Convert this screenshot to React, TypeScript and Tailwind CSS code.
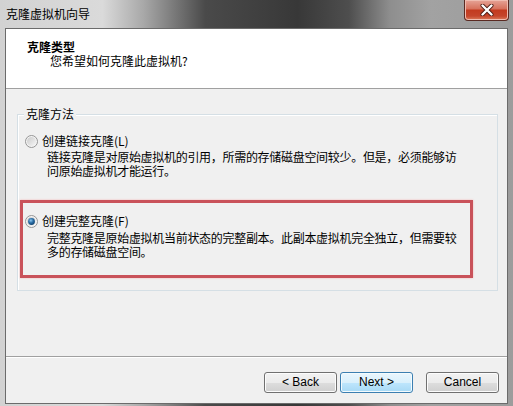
import React from "react";

const cjk = { fontFamily: '"Noto Sans CJK SC", "Liberation Sans", sans-serif' };
const latin = { fontFamily: '"Liberation Sans", "Noto Sans", sans-serif' };

function Radio({ checked }: { checked?: boolean }) {
  return (
    <svg width="13" height="13" viewBox="0 0 13 13" className="shrink-0">
      <defs>
        <linearGradient id={checked ? "rOn" : "rOff"} x1="0" y1="0" x2="1" y2="1">
          <stop offset="0" stopColor="#cbcbcb" />
          <stop offset="1" stopColor="#f6f6f6" />
        </linearGradient>
        <radialGradient id="dot" cx="0.4" cy="0.35" r="0.7">
          <stop offset="0" stopColor="#8cc7ee" />
          <stop offset="0.5" stopColor="#2b6ea6" />
          <stop offset="1" stopColor="#10416c" />
        </radialGradient>
      </defs>
      <circle cx="6.5" cy="6.5" r="6" fill="#f4f4f4" stroke="#959595" strokeWidth="1" />
      <circle cx="6.5" cy="6.5" r="4.5" fill={checked ? "url(#rOn)" : "url(#rOff)"} />
      {checked && <circle cx="6.5" cy="6.5" r="3.4" fill="url(#dot)" />}
    </svg>
  );
}

function WinButton({ label, primary }: { label: string; primary?: boolean }) {
  return (
    <button
      style={latin}
      className={
        primary
          ? "h-[21px] w-[73px] rounded-[3px] border border-[#3c7fb1] bg-[linear-gradient(#eaf6fd_0%,#d9f0fc_50%,#bee6fd_51%,#a7d9f5_100%)] text-[12px] leading-[19px] text-black shadow-[inset_0_0_0_1px_#f4fbfe]"
          : "h-[21px] w-[73px] rounded-[3px] border border-[#707070] bg-[linear-gradient(#f2f2f2_0%,#ebebeb_50%,#dddddd_51%,#cfcfcf_100%)] text-[12px] leading-[19px] text-black shadow-[inset_0_0_0_1px_#fcfcfc]"
      }
    >
      {label}
    </button>
  );
}

export default function App() {
  return (
    <div className="relative h-[406px] w-[513px] overflow-hidden bg-[linear-gradient(to_right,#d2d2d2_0%,#dadada_20%,#a8a8a8_28%,#4a4a4a_40%,#383838_58%,#4e4e4e_68%,#8e8e8e_76%,#a2a2a2_84%,#9c9c9c_100%)]">
      {/* title bar */}
      <div className="flex h-[28px] items-start">
        <span style={cjk} className="pl-[6px] pt-[6px] text-[12px] leading-[16px] text-black">
          克隆虚拟机向导
        </span>
      </div>
      <div className="absolute right-[4px] top-0 flex h-[21px] w-[45px] items-center justify-center rounded-b-[4px] border border-t-0 border-[#5a2a22] bg-[linear-gradient(#e6a497_0%,#d6705b_45%,#c23a1f_50%,#c5452b_80%,#dc7c5c_100%)] shadow-[inset_0_0_0_1px_#efbcb0]">
        <svg width="14" height="12" viewBox="0 0 14 12">
          <path d="M2.5 1.5 L11.5 10.5 M11.5 1.5 L2.5 10.5" stroke="#4a1a12" strokeWidth="4" strokeLinecap="round" />
          <path d="M2.5 1.5 L11.5 10.5 M11.5 1.5 L2.5 10.5" stroke="#ffffff" strokeWidth="2.4" strokeLinecap="round" />
        </svg>
      </div>

      {/* client area */}
      <div className="ml-[5px] flex h-[376px] w-[503px] flex-col border border-[#6b6b6b] bg-[#f0f0f0]">
        <div style={cjk} className="h-[60px] shrink-0 border-b border-[#a0a0a0] bg-white pl-[21px] pt-[11px] text-[12px] leading-[14px] text-black">
          <div className="font-bold">克隆类型</div>
          <div className="pl-[23px]">您希望如何克隆此虚拟机?</div>
        </div>

        <div style={cjk} className="h-[267px] shrink-0 pl-[11px] pt-[25px] text-[12px] leading-[14px] text-black">
          <div className="relative h-[177px] w-[481px] border border-[#d5dfe5] shadow-[inset_1px_1px_0_#ffffff]">
            <span className="absolute -top-[8px] left-[6px] bg-[#f0f0f0] px-[2px]">克隆方法</span>

            <div className="pl-[7px] pt-[19px]">
              <div className="flex items-center gap-[4px]">
                <Radio />
                <span>创建链接克隆(L)</span>
              </div>
              <div className="mt-[2px] whitespace-nowrap pl-[22px] tracking-[-0.3px]">
                链接克隆是对原始虚拟机的引用，所需的存储磁盘空间较少。但是，必须能够访
                <br />
                问原始虚拟机才能运行。
              </div>
            </div>

            <div className="ml-[2px] mt-[22px] h-[78px] w-[453px] border-[3px] border-[#c9525a] pl-[2px] pt-[11px] shadow-[0_0_2px_#f3b4b4]">
              <div className="flex items-center gap-[4px]">
                <Radio checked />
                <span>创建完整克隆(F)</span>
              </div>
              <div className="mt-[3px] whitespace-nowrap pl-[22px] tracking-[-0.3px]">
                完整克隆是原始虚拟机当前状态的完整副本。此副本虚拟机完全独立，但需要较
                <br />
                多的存储磁盘空间。
              </div>
            </div>
          </div>
        </div>

        <div className="flex flex-1 items-start justify-end gap-[13px] border-t border-[#a0a0a0] pr-[8px] pt-[15px] shadow-[inset_0_1px_0_#ffffff]">
          <div className="flex gap-[3px]">
            <WinButton label="< Back" />
            <WinButton label="Next >" primary />
          </div>
          <WinButton label="Cancel" />
        </div>
      </div>
    </div>
  );
}
